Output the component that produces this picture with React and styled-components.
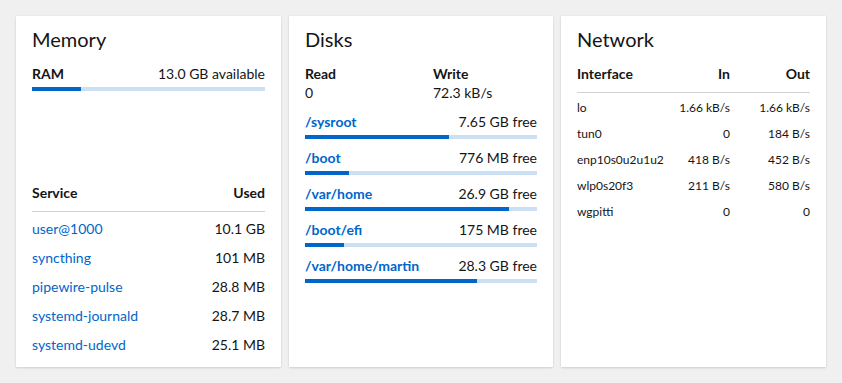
import React from "react";
import styled, { createGlobalStyle } from "styled-components";

const GlobalStyle = createGlobalStyle`
  html, body {
    margin: 0;
    padding: 0;
    background: #f0f0f0;
    font-family: Lato, "Liberation Sans", sans-serif;
    color: #151515;
  }
  * { box-sizing: border-box; }
`;

const memoryServices = [
  { name: "user@1000", used: "10.1 GB" },
  { name: "syncthing", used: "101 MB" },
  { name: "pipewire-pulse", used: "28.8 MB" },
  { name: "systemd-journald", used: "28.7 MB" },
  { name: "systemd-udevd", used: "25.1 MB" },
];

const disks = [
  { mount: "/sysroot", free: "7.65 GB free", used: 62 },
  { mount: "/boot", free: "776 MB free", used: 19 },
  { mount: "/var/home", free: "26.9 GB free", used: 88 },
  { mount: "/boot/efi", free: "175 MB free", used: 17 },
  { mount: "/var/home/martin", free: "28.3 GB free", used: 74 },
];

const interfaces = [
  { name: "lo", in: "1.66 kB/s", out: "1.66 kB/s" },
  { name: "tun0", in: "0", out: "184 B/s" },
  { name: "enp10s0u2u1u2", in: "418 B/s", out: "452 B/s" },
  { name: "wlp0s20f3", in: "211 B/s", out: "580 B/s" },
  { name: "wgpitti", in: "0", out: "0" },
];

export default function App() {
  return (
    <>
      <GlobalStyle />
      <Grid>
        <Card>
          <Title>Memory</Title>
          <UsageHead>
            <strong>RAM</strong>
            <span>13.0 GB available</span>
          </UsageHead>
          <Bar>
            <Fill style={{ width: "21%" }} />
          </Bar>
          <Spacer />
          <Table>
            <thead>
              <tr>
                <th>Service</th>
                <th className="num">Used</th>
              </tr>
            </thead>
            <tbody>
              {memoryServices.map((s) => (
                <tr key={s.name}>
                  <td>
                    <Link>{s.name}</Link>
                  </td>
                  <td className="num">{s.used}</td>
                </tr>
              ))}
            </tbody>
          </Table>
        </Card>

        <Card>
          <Title>Disks</Title>
          <IoStats>
            <div>
              <dt>Read</dt>
              <dd>0</dd>
            </div>
            <div>
              <dt>Write</dt>
              <dd>72.3 kB/s</dd>
            </div>
          </IoStats>
          <DiskList>
            {disks.map((d) => (
              <div key={d.mount}>
                <UsageHead>
                  <MountLink>{d.mount}</MountLink>
                  <span>{d.free}</span>
                </UsageHead>
                <Bar>
                  <Fill style={{ width: `${d.used}%` }} />
                </Bar>
              </div>
            ))}
          </DiskList>
        </Card>

        <Card>
          <Title>Network</Title>
          <Table compact>
            <thead>
              <tr>
                <th>Interface</th>
                <th className="num in">In</th>
                <th className="num out">Out</th>
              </tr>
            </thead>
            <tbody>
              {interfaces.map((i) => (
                <tr key={i.name}>
                  <td>{i.name}</td>
                  <td className="num">{i.in}</td>
                  <td className="num">{i.out}</td>
                </tr>
              ))}
            </tbody>
          </Table>
        </Card>
      </Grid>
    </>
  );
}

const Grid = styled.main`
  display: grid;
  grid-template-columns: 265px 264px 265px;
  gap: 8px;
  padding: 16px;
  height: 383px;
`;

const Card = styled.section`
  background: #fff;
  box-shadow: 0 1px 2px rgba(3, 3, 3, 0.12), 0 0 2px rgba(3, 3, 3, 0.06);
  padding: 8px 16px 0;
  display: flex;
  flex-direction: column;
  min-width: 0;
`;

const Title = styled.h2`
  margin: 0 0 10px;
  font-size: 20px;
  font-weight: 400;
  line-height: 30px;
`;

const UsageHead = styled.div`
  display: flex;
  justify-content: space-between;
  align-items: baseline;
  font-size: 14px;
  line-height: 20px;
  strong {
    font-weight: 700;
  }
`;

const Bar = styled.div`
  margin-top: 3px;
  height: 4px;
  background: #cce0f5;
`;

const Fill = styled.div`
  height: 100%;
  background: #0066cc;
`;

const Spacer = styled.div`
  flex: 1;
`;

const Link = styled.a`
  color: #0066cc;
  cursor: pointer;
`;

const MountLink = styled(Link)`
  font-weight: 700;
`;

const Table = styled.table`
  width: 100%;
  table-layout: fixed;
  border-collapse: collapse;
  font-size: ${(p) => (p.compact ? "12px" : "14px")};
  margin-bottom: ${(p) => (p.compact ? "0" : "8px")};
  th {
    font-size: 14px;
    font-weight: 700;
    text-align: left;
    padding: 0 0 8px;
    border-bottom: 1px solid #d2d2d2;
    line-height: 20px;
  }
  th.in {
    width: 73px;
  }
  th.out {
    width: 80px;
  }
  td {
    height: ${(p) => (p.compact ? "26px" : "29px")};
    padding: 0;
    line-height: 20px;
    white-space: nowrap;
  }
  tbody tr:first-child td {
    padding-top: ${(p) => (p.compact ? "2px" : "3px")};
    height: ${(p) => (p.compact ? "28px" : "32px")};
  }
  .num {
    text-align: right;
  }
`;

const IoStats = styled.dl`
  display: grid;
  grid-template-columns: 1fr 1fr;
  column-gap: 24px;
  margin: 0 0 10px;
  font-size: 14px;
  line-height: 19px;
  dt {
    font-weight: 700;
  }
  dd {
    margin: 0;
  }
`;

const DiskList = styled.div`
  display: flex;
  flex-direction: column;
  gap: 9px;
`;
